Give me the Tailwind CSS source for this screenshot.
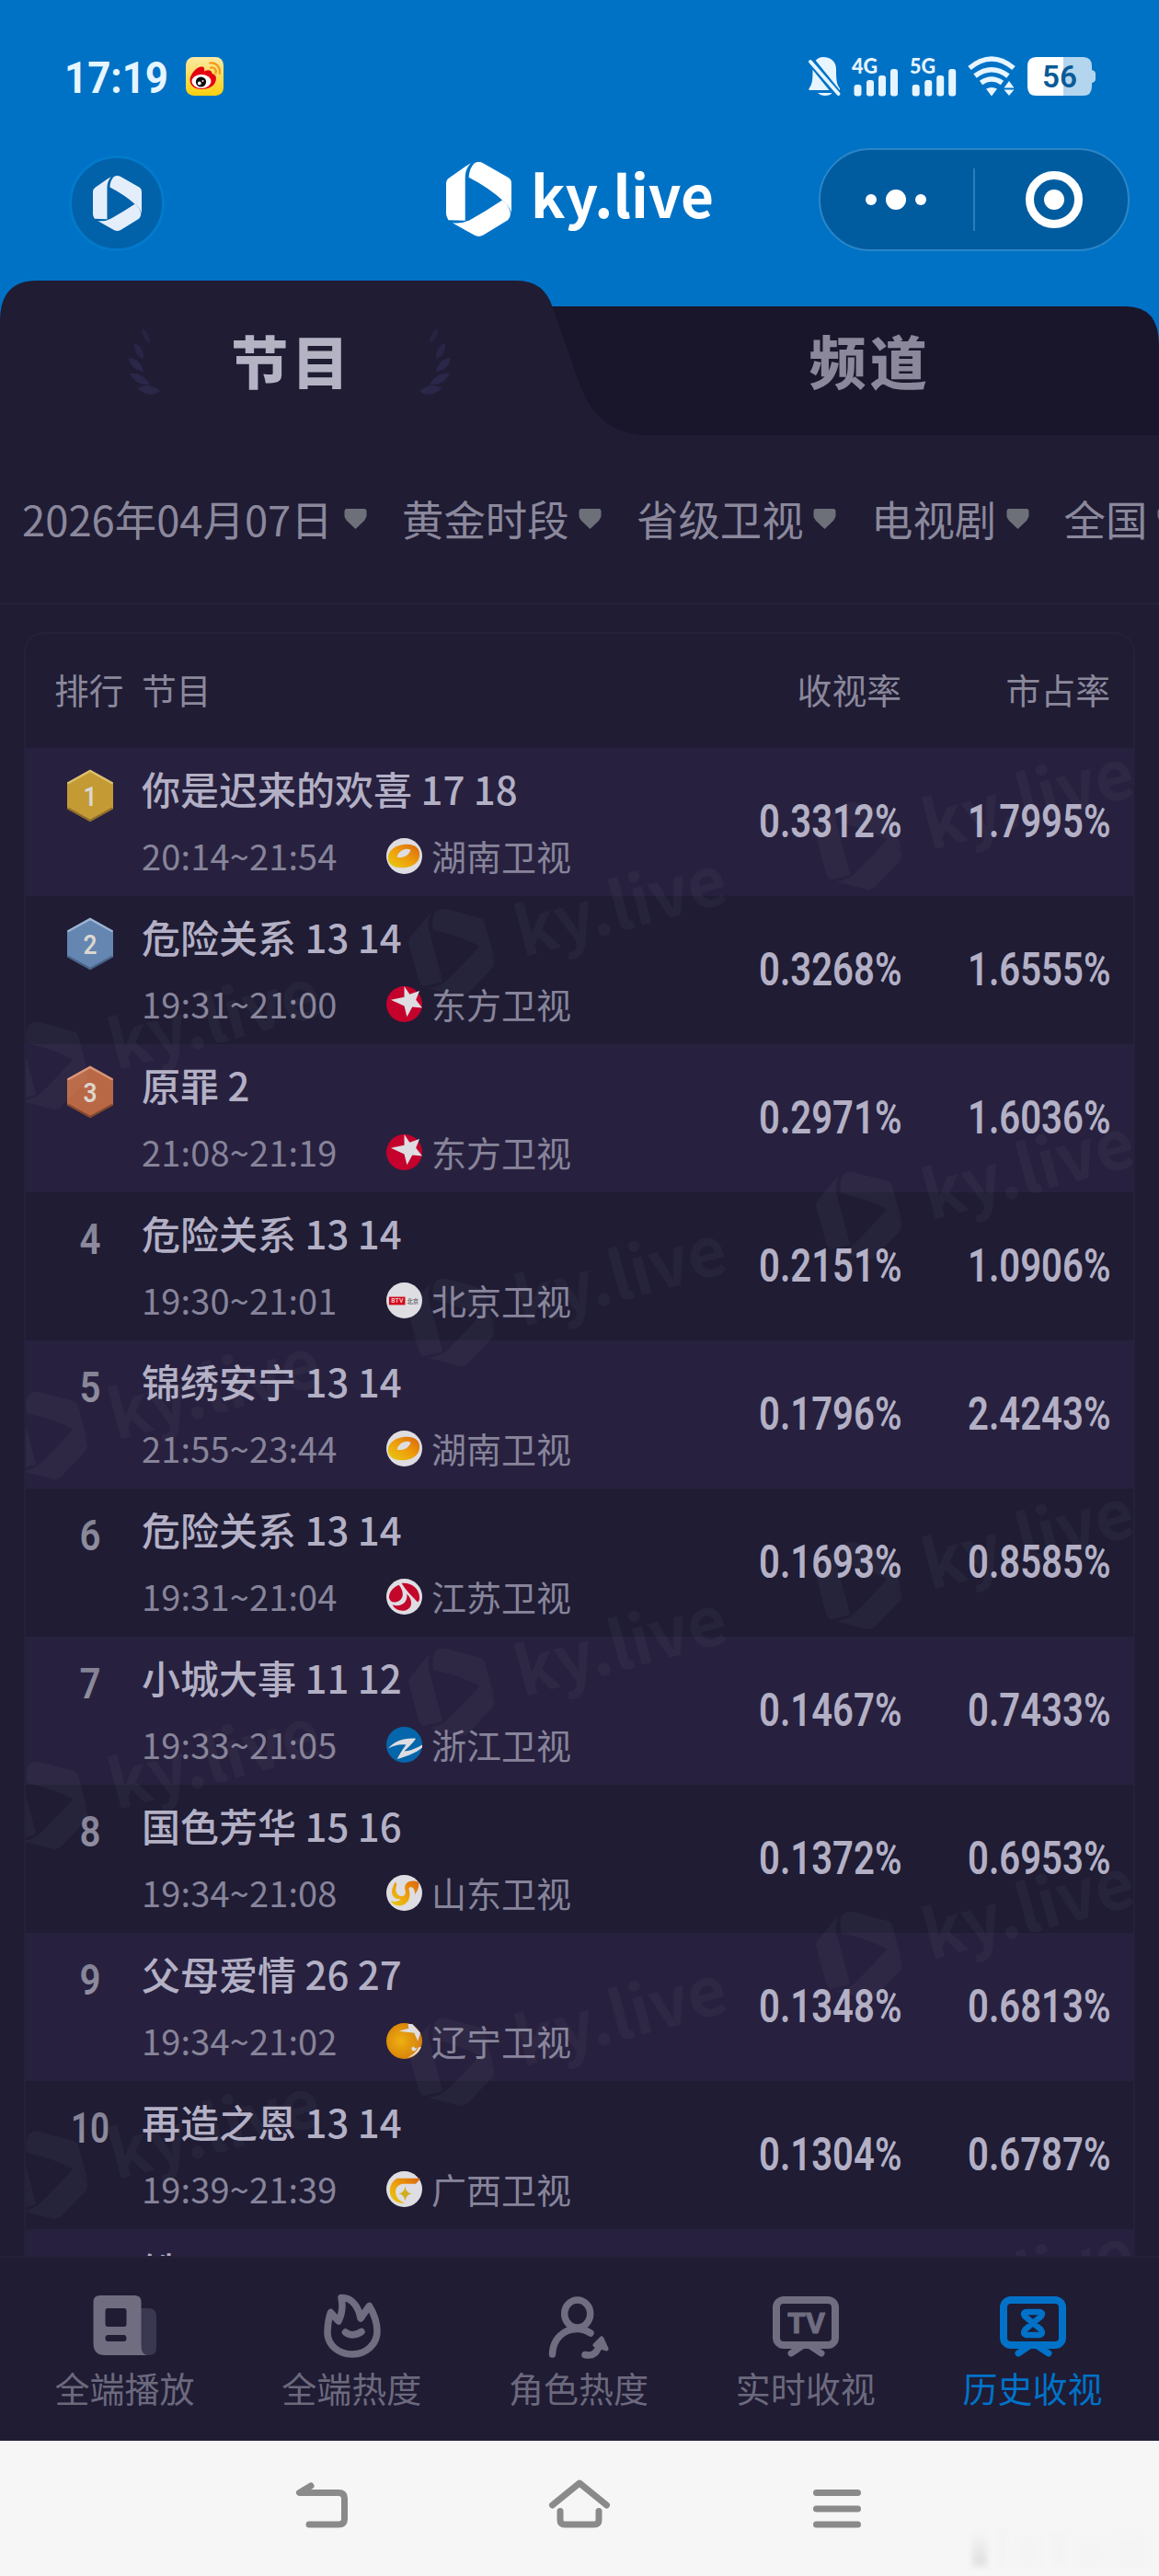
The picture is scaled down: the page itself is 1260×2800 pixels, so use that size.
<!DOCTYPE html>
<html lang="zh-CN">
<head>
<meta charset="utf-8">
<title>ky.live</title>
<script src="https://cdn.jsdelivr.net/npm/@tailwindcss/browser@4"></script>
</head>
<body class="w-[1260px] h-[2800px] overflow-hidden bg-[#1f1c34] font-['Noto_Sans_CJK_SC',sans-serif]">

<!-- shared symbols -->
<svg width="0" height="0" class="absolute">
  <defs>
    <linearGradient id="rankGrad" x1="0" y1="0" x2="0" y2="1"><stop offset="0" stop-color="#7f7d90"/><stop offset="1" stop-color="#9593a4"/></linearGradient>
    <linearGradient id="orange" x1="0" y1="1" x2="1" y2="0"><stop offset="0" stop-color="#e6cc10"/><stop offset=".5" stop-color="#ee9d0c"/><stop offset="1" stop-color="#d9650c"/></linearGradient>
    <radialGradient id="ball" cx=".4" cy=".5" r=".6"><stop offset="0" stop-color="#efb011"/><stop offset="1" stop-color="#d37c08"/></radialGradient>
    <symbol id="mark" viewBox="0 0 72 82" preserveAspectRatio="none">
      <path d="M21 6.500V64.500L2.500 64Q0 60 0 57V24Q0 20 3.500 17.500L22 4.500Q28 1 27.500 1Q21 8 21 17Z"/>
      <path d="M25 17Q25.500 7 31 1.500Q36 -1.500 41 1.500L69 17.500Q72 19.500 72 24V56Q70 49 63 43Q48 29 25 17Z"/>
      <path d="M62 42Q70 48 71 57Q71 61 68 64L41 80.500Q36 83.500 31 80.500L7 67Q18 68.500 27 63.500Q44 54 62 42Z"/>
    </symbol>
  </defs>
</svg>

<div class="relative w-[1260px] h-[2800px] flex flex-col">
  <!-- blue header -->
  <header class="h-[305px] shrink-0 bg-[#0072c6] relative">
    <div class="flex items-start justify-between pt-[62px] pl-[70px] pr-[67px] h-[161px]">
      <div class="flex items-start">
        <svg width="132" height="42" class="block overflow-visible"><text x="0" y="39" textLength="113" lengthAdjust="spacingAndGlyphs" font-family="Roboto, sans-serif" font-weight="700" font-size="49" fill="#e6f5ff">17:19</text></svg>
        <svg width="41" height="42" viewBox="0 0 41 42" class="block">
          <defs><linearGradient id="wb" x1="0" y1="0" x2="0" y2="1"><stop offset="0" stop-color="#fbe9a4"/><stop offset="1" stop-color="#fcd00c"/></linearGradient></defs>
          <rect width="41" height="42" rx="8.500" fill="url(#wb)"/>
          <path d="M4.500 25C4.500 18 13 9.500 18 10.500C20.500 11 20.500 13.500 20 15.500C24 13.500 28.500 14 28.500 18C33 19.500 33.500 22 32.500 26C31 32 24 35 17 35C9.500 35 4.500 31 4.500 25Z" fill="#e50012"/>
          <ellipse cx="17" cy="26.500" rx="10.500" ry="7.500" fill="#fff"/>
          <circle cx="16.500" cy="27" r="5.600" fill="#0a0a0a"/><circle cx="14.800" cy="28.500" r="1.900" fill="#fff"/><circle cx="18.500" cy="26" r=".9" fill="#fff"/>
          <path d="M26 6.500C33 5.500 38 11 36.800 18M27 11.500C31 11 33.500 13.500 32.500 17.500" fill="none" stroke="#f39a1b" stroke-width="2.200" stroke-linecap="round"/>
        </svg>
      </div>
      <svg width="315" height="44" viewBox="0 0 315 44" class="block overflow-visible" fill="#e6f5ff">
        <!-- muted bell -->
        <path d="M17 0C24 0 31 4 31 13C31 24 31.500 30 35 34V36H1.500V34C5 30 5.500 24 5.500 16C5.500 5 10 0 17 0Z"/>
        <path d="M11 39H27Q24 42 19 42Q14 42 11 39Z"/>
        <path d="M0 0L34 42" stroke="#0072c6" stroke-width="9" fill="none"/>
        <path d="M3 5L33.500 40" stroke="#e6f5ff" stroke-width="4" stroke-linecap="round" fill="none"/>
        <g font-family="Lato, sans-serif" font-weight="900" font-size="22.500"><text x="48" y="17.500" textLength="28" lengthAdjust="spacingAndGlyphs">4G</text><text x="111" y="17.500" textLength="28" lengthAdjust="spacingAndGlyphs">5G</text></g>
        <g id="bars"><rect x="50.500" y="30" width="8" height="12.500" rx="3"/><rect x="64" y="25" width="8" height="17.500" rx="3"/><rect x="77" y="20" width="8" height="22.500" rx="3"/><rect x="90" y="13" width="8" height="29.500" rx="3"/></g>
        <use href="#bars" x="63.200"/>
        <g transform="translate(1 0)">
          <g fill="none" stroke="#e6f5ff" stroke-width="5.500">
            <path d="M175 12Q199 -8 223 12"/><path d="M181 20.500Q199 7 217 20.500"/><path d="M187.500 28Q199 20 210.500 28"/>
          </g>
          <path d="M193 34.500Q199 31.500 205 34.500L199 42.500Z"/>
          <path d="M218 26L223.500 33.500H212.500ZM218 42L223.500 35.500H212.500Z"/>
        </g>
        <g transform="translate(3 0)">
          <path d="M245.500 0H276V42H245.500Q236 42 236 32V10Q236 0 245.500 0Z" fill="#fff"/>
          <path d="M275 0H296.500Q306 0 306 10V14Q310 15 310 18V24Q310 27 306 28V32Q306 42 296.500 42H275Z" fill="#b3d5ee"/>
          <text x="252" y="33" textLength="38" lengthAdjust="spacingAndGlyphs" font-family="Roboto, sans-serif" font-weight="600" font-size="34" fill="#0a5a96">56</text>
        </g>
      </svg>
    </div>
    <div class="flex items-start">
      <div class="ml-[75px] mt-[8px] size-[104px] rounded-full bg-[#0161a9] border-[3px] border-[#037acb] flex items-center justify-center">
        <svg width="53" height="60" fill="#e3eefa" class="block"><use href="#mark" width="53" height="60"/></svg>
      </div>
      <div class="ml-[306px] mt-[15px] flex items-start h-[90px] w-[405px]">
        <svg width="71" height="81" fill="#fff" class="block shrink-0"><use href="#mark" width="71" height="81"/></svg>
        <span class="ml-[21px] -mt-[6px] text-[62px] leading-[80px] font-bold text-white">ky.live</span>
      </div>
      <div class="w-[338px] h-[112px] rounded-full bg-[#005c9f] border-2 border-[#2a86c8] flex items-center">
        <div class="w-[166px] pr-[2px] flex items-center justify-center gap-[10px]">
          <i class="size-[12px] rounded-full bg-white"></i><i class="size-[22px] rounded-full bg-white"></i><i class="size-[12px] rounded-full bg-white"></i>
        </div>
        <div class="w-[2px] h-[68px] bg-[#2a7fbd]"></div>
        <div class="flex-1 flex justify-center pl-[5px]">
          <div class="size-[62px] rounded-full border-[9px] border-white flex items-center justify-center"><i class="size-[22px] rounded-full bg-white"></i></div>
        </div>
      </div>
    </div>
  </header>

  <!-- tabs -->
  <div class="h-[170px] shrink-0 grid relative">
    <svg width="1260" height="170" class="block [grid-area:1/1]">
      <rect width="1260" height="100" fill="#0072c6"/>
      <path d="M500 28H1224Q1260 28 1260 70V168H500Z" fill="#19162c"/>
      <path d="M0 170V44Q0 0 40 0H562Q592 0 601 30L630 112Q650 168 705 168H1260V170Z" fill="#1f1c34"/>
      <g fill="#2b2749">
        <g id="laurel" transform="translate(0 -14)">
          <path d="M154 66Q163 70 163 82Q154 78 154 66Z" opacity=".7"/><path d="M146 82Q157 86 156 99Q145 95 146 82Z" opacity=".85"/><path d="M140 98Q153 99 156 113Q142 111 140 98Z"/><path d="M141 115Q155 113 163 127Q148 129 141 115Z"/><path d="M149 131Q162 124 174 134Q163 143 149 131Z"/>
        </g>
        <use href="#laurel" transform="translate(630 0) scale(-1 1)"/>
      </g>
    </svg>
    <div class="[grid-area:1/1] grid grid-cols-2 text-[62px] font-black leading-[80px] tracking-[4px] pt-[46px] pl-[3px] text-center relative">
      <div class="text-[#b4b3c3]">节目</div>
      <div class="text-[#8a889a]">频道</div>
    </div>
  </div>

  <!-- filters -->
  <div id="filters" class="h-[180px] shrink-0 flex items-center pl-[24px] overflow-hidden whitespace-nowrap text-[45.400px] leading-[60px] text-[#8b889c]"></div>
  <div class="h-[2px] shrink-0 bg-[#25223c]"></div>

  <!-- ranking table -->
  <section class="mx-[26px] mt-[30px] h-[1765px] shrink-0 border-2 border-b-0 border-[#242139] rounded-t-[22px] overflow-hidden relative">
    <div class="h-[124px] pb-[4px] flex items-center text-[37.800px] leading-[50px] text-[#8b889c] pl-[31px] pr-[25px]">
      <span class="w-[95px]">排行</span><span class="flex-1">节目</span><span class="w-[200px] text-right">收视率</span><span class="w-[227px] text-right">市占率</span>
    </div>
    <div id="rows"></div>
    <svg width="1204" height="1640" class="absolute left-0 top-[123px] pointer-events-none" id="wm" fill="#fff" fill-opacity=".035"></svg>
  </section>

  <!-- bottom tabs -->
  <nav class="h-[201px] shrink-0 border-t-2 border-[#242139] bg-[#1f1c34] grid grid-cols-5 pl-[12px] pr-[14px] pt-[34px] text-[38px] leading-[50px] text-[#6c697d]">
    <div class="flex flex-col items-center">
      <svg width="80" height="80" viewBox="0 0 80 80" class="block"><path d="M50 21H67Q75 21 75 30V64Q75 72 67 72H50Z" fill="#3a3750"/><path fill-rule="evenodd" fill="#706d81" d="M14 7H51Q58.500 7 58.500 14V62Q58.500 71 65 72H19Q6.500 72 6.500 59V14Q6.500 7 14 7ZM22 21Q19.500 21 19.500 24V38Q19.500 41 22 41H40Q42.500 41 42.500 38V24Q42.500 21 40 21ZM22.500 50Q19.500 50 19.500 53.500Q19.500 57 22.500 57H39.500Q42.500 57 42.500 53.500Q42.500 50 39.500 50Z"/></svg>
      <span class="mt-[2px]">全端播放</span>
    </div>
    <div class="flex flex-col items-center">
      <svg width="80" height="80" viewBox="0 0 80 80" fill="none" stroke="#706d81" stroke-width="7.500" stroke-linejoin="round" stroke-linecap="round" class="block"><path d="M26 35L17.500 25.500Q14 36 14 47C14 61 26 71 41 71C56 71 68 60 68 46C68 36 64 26 59.500 18.500L50 32C48 20 41 9 29 9.500Q32 23 26 35Z"/><path d="M33.500 47Q41 53 51 46.500"/></svg>
      <span class="mt-[2px]">全端热度</span>
    </div>
    <div class="flex flex-col items-center">
      <svg width="80" height="80" viewBox="0 0 80 80" fill="none" stroke="#706d81" stroke-width="7.500" stroke-linejoin="round" stroke-linecap="round" class="block"><ellipse cx="38.700" cy="27" rx="14" ry="15"/><path d="M11.500 71C12 54 24 43.500 38.500 43.500Q46 43.500 53 48M47 71.500Q57 74 61 65L64 60"/><path d="M65 54L70 65L58 61Z" fill="#706d81" stroke-width="5"/></svg>
      <span class="mt-[2px]">角色热度</span>
    </div>
    <div class="flex flex-col items-center">
      <svg width="80" height="80" viewBox="0 0 80 80" fill="none" stroke="#706d81" stroke-width="8" stroke-linejoin="round" stroke-linecap="round" class="block overflow-visible"><rect x="8" y="12" width="64" height="49" rx="8"/><path d="M24 70L36 62M57 70L45 62" stroke-width="7"/><text x="20" y="47.500" textLength="41" lengthAdjust="spacingAndGlyphs" font-family="Roboto, sans-serif" font-weight="700" font-size="31" fill="#706d81" stroke="#706d81" stroke-width="1">TV</text></svg>
      <span class="mt-[2px]">实时收视</span>
    </div>
    <div class="flex flex-col items-center text-[#0172c8]">
      <svg width="80" height="80" viewBox="0 0 80 80" fill="none" stroke="#0172c8" stroke-width="8" stroke-linejoin="round" stroke-linecap="round" class="block"><rect x="8" y="12" width="64" height="49" rx="8"/><path d="M24 70L36 62M57 70L45 62" stroke-width="7"/><path d="M33 25H47Q52 26 48.500 30L31.500 44Q28 49 33 50H47Q52 49 48.500 44L31.500 30Q28 26 33 25Z" stroke-width="6.500"/></svg>
      <span class="mt-[2px]">历史收视</span>
    </div>
  </nav>

  <!-- system navigation -->
  <footer class="h-[147px] shrink-0 bg-[#f6f6f6] relative flex items-start justify-center pt-[39px]">
    <svg width="630" height="64" viewBox="0 0 630 64" fill="none" stroke="#8a8a8a" stroke-width="7" stroke-linecap="round" stroke-linejoin="round" class="block">
      <path d="M23 10L10.500 17.500H53Q59.500 17.500 59.500 23.500V46Q59.500 52 53 52H21"/>
      <path d="M285.500 31L315 7L344.500 31M294 37.500V47Q294 52 299 52H331Q336 52 336 47V37.500"/>
      <path d="M572.500 17.500H617.500M572.500 35H617.500M572.500 52H617.500"/>
    </svg>
    <div class="absolute right-[14px] bottom-[11px] flex items-end gap-[14px] blur-[3px]">
      <i class="w-[16px] h-[36px] bg-gradient-to-b from-[#f4f4f4] to-[#dedede]"></i><i class="w-[5px] h-[38px] bg-[#f1f1f1]"></i><i class="w-[24px] h-[30px] bg-[#f4f4f4]"></i><i class="w-[14px] h-[34px] bg-[#f3f3f3]"></i><i class="w-[26px] h-[28px] bg-[#f4f4f4]"></i><i class="w-[34px] h-[32px] bg-[#f4f4f4]"></i>
    </div>
  </footer>
</div>

<script>
const filters = [['2026年04月07日','w-[339.500px]'],['黄金时段','w-[181.500px]'],['省级卫视','w-[181.500px]'],['电视剧','w-[136px]'],['全国','w-[91px]']];
document.getElementById('filters').innerHTML = filters.map(([t, w]) =>
  `<span class="${w} shrink-0 -mt-[5px]">${t}</span>
   <svg width="25" height="24" viewBox="0 0 25 24" class="block shrink-0 ml-[10.500px] mr-[38px] -mt-[2px]"><path d="M3 1H22Q24.500 1 24.500 4V9Q24 11 22 14L12.500 23L3 14Q.5 11 .5 9V4Q.5 1 3 1Z" fill="#6e7079"/></svg>`).join('');

const logos = {
  '湖南卫视': '<circle cx="20" cy="20" r="20" fill="#dedde2"/><path fill-rule="evenodd" fill="url(#orange)" d="M2 22C2 12 13 7 23 7C33 7 38 12 37 20C36 28 28 33 18 33C9 33 2 30 2 22ZM12 21C16 23 26 20 27 13C21 10 13 15 12 21Z"/>',
  '东方卫视': '<circle cx="20" cy="20" r="20" fill="#c4022b"/><path d="M20 0L26 9L37 5L33 15L40 24L29 23L23 34L20 22L5 15L20 12Z" fill="#dedde2"/>',
  '北京卫视': '<circle cx="20" cy="20" r="20" fill="#dedde2"/><rect x="3" y="16" width="18" height="9" fill="#d2091c"/><text x="5.500" y="23" font-size="7" font-weight="700" font-family="Roboto" fill="#f3c3c8">BTV</text><text x="23" y="23.500" font-size="6.500" font-weight="700" fill="#77757c">北京</text>',
  '江苏卫视': '<circle cx="20" cy="20" r="20" fill="#dedde2"/><g fill="#c4062a"><path d="M17 5C29 4 37 12 37 21C37 25 35 27 34 25C28 19 22 13 17 5Z"/><path d="M14 7C19 13 20 21 15 24C9 28 4 26 3 21C3 15 8 9 14 7Z"/><path d="M23 17C30 24 29 33 22 35C16 37 9 34 7 29C15 32 24 28 23 17Z"/></g>',
  '浙江卫视': '<circle cx="20" cy="20" r="20" fill="#0566ab"/><path d="M2 24C9 16 20 12 33 13C29 19 24 23 20 27C27 27 33 24 40 20V23C33 29 25 32 12 36C15 30 18 25 22 20C14 19 8 21 2 24Z" fill="#dedde2"/>',
  '山东卫视': '<circle cx="20" cy="20" r="20" fill="#dedde2"/><path d="M10 8C14 10 8 16 12 21C16 26 23 24 21 17C19 9 26 4 36 8C37 15 34 18 32 22C32 14 27 12 25 15C27 22 27 31 17 34C11 35 7 33 5 29C12 31 17 28 15 27C8 27 2 21 10 8Z" fill="url(#orange)"/>',
  '辽宁卫视': '<circle cx="20" cy="20" r="20" fill="url(#ball)"/><path d="M24 1L29 1L38 11L35 20L31 11L14 9L25 6Z" fill="#dedde2"/><path d="M30 26L32 28L34 28L32 31L29 31L28 28Z" fill="#dedde2"/><path d="M39 27Q34 37 23 39Q33 34 36 27Z" fill="#dedde2"/>',
  '广西卫视': '<circle cx="20" cy="20" r="20" fill="#dedde2"/><path d="M12 8H38L33 14H19C11 15 9 21 11 27Q13 33 21 36C9 36 3 29 4 20Q5 12 12 8Z" fill="url(#orange)"/><path d="M21 17Q22 24 28 25Q22 26 21 33Q20 26 14 25Q20 24 21 17Z" fill="#cfae1c"/>'
};
const hex = [['#c39a34','#dcc06f','#8e6c2c'],['#6486b0','#9db4d2','#4a6288'],['#b96845','#d99678','#84482f']];
const rows = [
  ['你是迟来的欢喜 17 18','20:14~21:54','湖南卫视','0.3312%','1.7995%'],
  ['危险关系 13 14','19:31~21:00','东方卫视','0.3268%','1.6555%'],
  ['原罪 2','21:08~21:19','东方卫视','0.2971%','1.6036%'],
  ['危险关系 13 14','19:30~21:01','北京卫视','0.2151%','1.0906%'],
  ['锦绣安宁 13 14','21:55~23:44','湖南卫视','0.1796%','2.4243%'],
  ['危险关系 13 14','19:31~21:04','江苏卫视','0.1693%','0.8585%'],
  ['小城大事 11 12','19:33~21:05','浙江卫视','0.1467%','0.7433%'],
  ['国色芳华 15 16','19:34~21:08','山东卫视','0.1372%','0.6953%'],
  ['父母爱情 26 27','19:34~21:02','辽宁卫视','0.1348%','0.6813%'],
  ['再造之恩 13 14','19:39~21:39','广西卫视','0.1304%','0.6787%'],
  ['铁','','','','']
];
const rank = i => i > 9 ? '' : i < 3
  ? `<svg width="52" height="58" viewBox="0 0 52 58" class="block overflow-visible mt-[23px]"><path d="M26 1L51 15V43L26 57L1 43V15Z" fill="${hex[i][0]}"/><path d="M1.500 15.500L26 2L50.500 15.500" fill="none" stroke="${hex[i][1]}" stroke-width="2.500"/><path d="M1.500 42.500L26 56L50.500 42.500" fill="none" stroke="${hex[i][2]}" stroke-width="2"/><text x="26" y="39.500" text-anchor="middle" font-family="Roboto, sans-serif" font-weight="600" font-size="30" fill="#dcd6cf" textLength="15" lengthAdjust="spacingAndGlyphs">${i + 1}</text></svg>`
  : `<svg width="52" height="58" viewBox="0 0 52 58" class="block overflow-visible mt-[22px]"><text x="26" y="45" text-anchor="middle" textLength="${i > 8 ? 42 : 23}" lengthAdjust="spacingAndGlyphs" font-family="Roboto, sans-serif" font-weight="600" font-size="47" fill="url(#rankGrad)">${i + 1}</text></svg>`;
const num = (v, c) => `<svg height="60" class="block overflow-visible ${c} w-[153px]" viewBox="0 0 153 60"><text x="0" y="48" textLength="155.500" lengthAdjust="spacingAndGlyphs" font-family="Roboto, sans-serif" font-weight="600" font-size="50" fill="#b3b0c5">${v}</text></svg>`;
document.getElementById('rows').innerHTML = rows.map((r, i) =>
  `<div class="h-[161px] flex ${i % 2 ? 'bg-[#1f1c34]' : 'bg-[#27213f]'}">
    <div class="w-[126px] pl-[44px]">${rank(i)}</div>
    <div class="flex-1 whitespace-nowrap pt-[14px]">
      <div class="text-[42px] leading-[60px] font-medium text-[#b3b0c5]">${r[0]}</div>
      ${r[2] ? `<div class="flex items-center mt-[15px] text-[38px] leading-[56px] text-[#87849a]"><span class="w-[266px] tracking-[0.150px]">${r[1]}</span><svg width="39" height="39" viewBox="0 0 40 40" class="block overflow-visible mr-[10px]">${logos[r[2]]}</svg><span>${r[2]}</span></div>` : ''}
    </div>
    ${r[3] ? `<div class="flex pt-[49px] pr-[27px]">${num(r[3], 'mr-[74px]')}${num(r[4], '')}</div>` : ''}
  </div>`).join('');

/* tiled brand watermark over the table body */
let wm = '';
for (const [x, y] of [[22, 345], [464, 222], [907, 106]])
  for (let k = 0; k < 5; k++)
    wm += `<g transform="translate(${x} ${y + 402 * k}) rotate(-15)"><use href="#mark" x="-44" y="-48" width="86" height="98"/><text x="72" y="26" font-size="73" font-weight="700">ky.live</text></g>`;
document.getElementById('wm').innerHTML = wm;
</script>
</body>
</html>
